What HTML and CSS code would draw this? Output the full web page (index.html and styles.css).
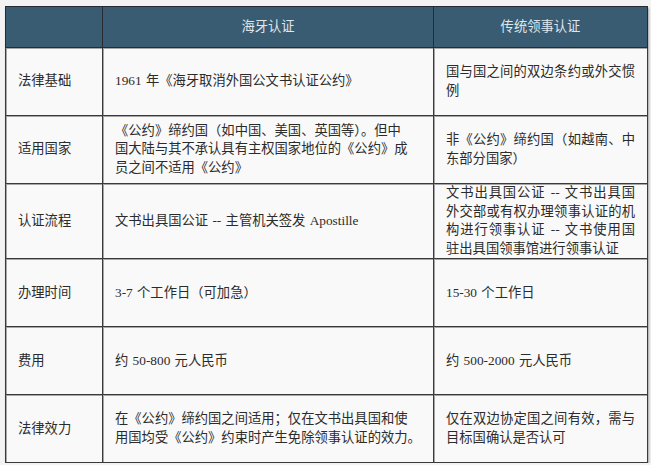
FILE: index.html
```html
<!DOCTYPE html>
<html lang="zh-CN">
<head>
<meta charset="utf-8">
<title>海牙认证与传统领事认证对比</title>
<link rel="stylesheet" href="styles.css">
</head>
<body>
<table class="compare">
  <colgroup>
    <col class="c1"><col class="c2"><col class="c3">
  </colgroup>
  <thead>
    <tr class="head">
      <th></th>
      <th>海牙认证</th>
      <th>传统领事认证</th>
    </tr>
  </thead>
  <tbody>
    <tr>
      <td class="label">法律基础</td>
      <td>1961 年《海牙取消外国公文书认证公约》</td>
      <td>国与国之间的双边条约或外交惯例</td>
    </tr>
    <tr>
      <td class="label">适用国家</td>
      <td>《公约》缔约国（如中国、美国、英国等）。但中<br>国大陆与其不承认具有主权国家地位的《公约》成<br>员之间不适用《公约》</td>
      <td>非《公约》缔约国（如越南、中东部分国家）</td>
    </tr>
    <tr class="tall">
      <td class="label">认证流程</td>
      <td>文书出具国公证 -- 主管机关签发 Apostille</td>
      <td>文书出具国公证 -- 文书出具国外交部或有权办理领事认证的机构进行领事认证 -- 文书使用国驻出具国领事馆进行领事认证</td>
    </tr>
    <tr>
      <td class="label">办理时间</td>
      <td>3-7 个工作日（可加急）</td>
      <td>15-30 个工作日</td>
    </tr>
    <tr>
      <td class="label">费用</td>
      <td>约 50-800 元人民币</td>
      <td>约 500-2000 元人民币</td>
    </tr>
    <tr>
      <td class="label">法律效力</td>
      <td>在《公约》缔约国之间适用；仅在文书出具国和使<br>用国均受《公约》约束时产生免除领事认证的效力。</td>
      <td>仅在双边协定国之间有效，需与目标国确认是否认可</td>
    </tr>
  </tbody>
</table>
</body>
</html>
```
FILE: styles.css
```css
html, body {
  margin: 0;
  padding: 0;
  background: #f3f3f3;
}
body {
  padding: 6px 5px 0 5px;
  font-family: "Liberation Serif", "Noto Sans CJK SC", serif;
  font-size: 13.3px;
  color: #2b2b2b;
}
.compare {
  width: 642px;
  border-collapse: collapse;
  table-layout: fixed;
  background: #f9f9f9;
  box-shadow: 1px 2px 2px rgba(0, 0, 0, 0.35);
}
.c1 { width: 97px; }
.c2 { width: 331px; }
.c3 { width: 214px; }
.compare th,
.compare td {
  border: 1px solid #3a3a3a;
  padding: 0 12px;
  line-height: 18.6px;
  vertical-align: middle;
}
.compare th {
  background: #3a5c73;
  color: #dfe6eb;
  font-weight: normal;
  height: 40px;
  text-align: center;
  border-color: #262c31;
}
.compare td {
  height: 67px;
  text-align: justify;
  word-spacing: 1px;
  box-shadow: inset 1px 1px 0 #a6a6a6;
}
.compare tr.tall td {
  height: 73px;
}
.compare td.label {
  text-align: left;
}
```
